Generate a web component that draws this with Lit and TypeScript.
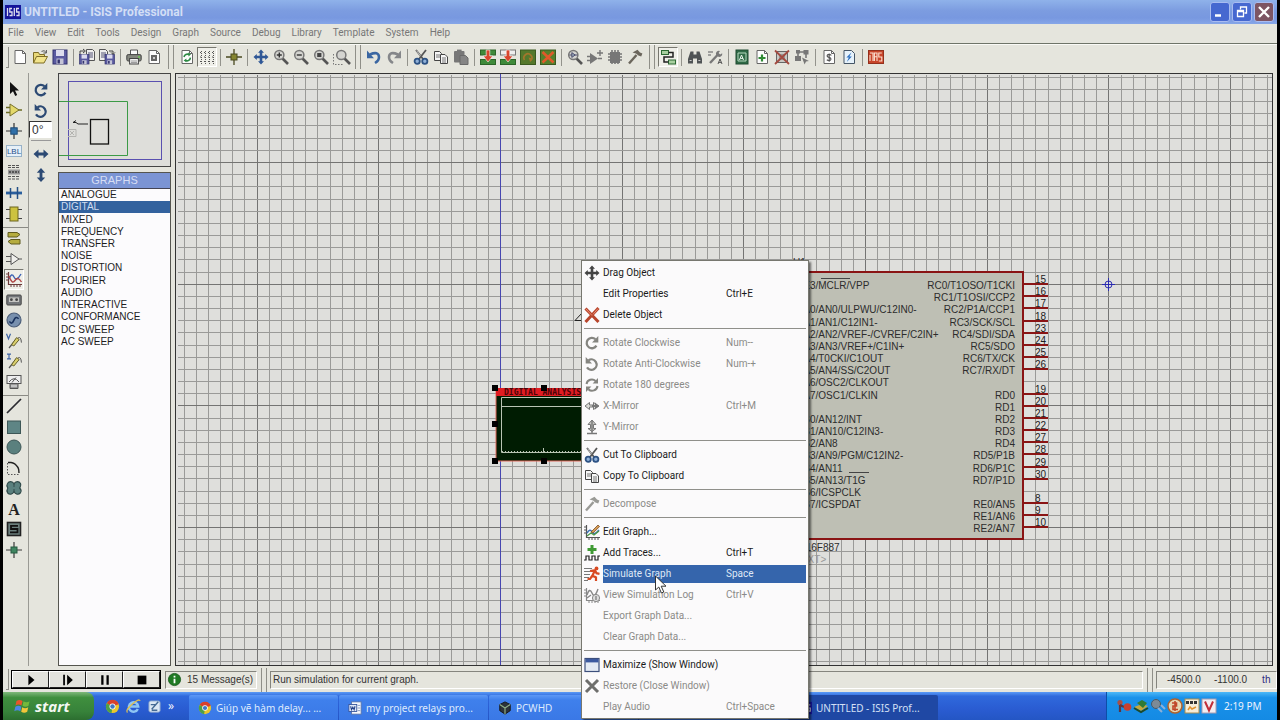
import { LitElement, html, css, svg, nothing, TemplateResult } from "lit";
import { customElement, property } from "lit/decorators.js";
import { classMap } from "lit/directives/class-map.js";

const mag = (inner: TemplateResult | null, stroke = "#777") => svg`
  <path d="M9.5 9.5 L15 15" stroke="#555" stroke-width="2.6"/>
  <circle cx="6.3" cy="6" r="4.6" fill="#d4d4d0" stroke=${stroke} stroke-width="1.5"/>${inner}`;
const page = svg`<path d="M3 1.5h7.5l3 3v10H3z" fill="#fdfdfd" stroke="#666"/><path d="M10.5 1.5v3h3" fill="none" stroke="#666"/>`;
const floppy = (x: number, y: number, s: number) => svg`<g transform="translate(${x} ${y}) scale(${s})">
  <rect x="0" y="0" width="14" height="14" fill="#5a5aa0" stroke="#33336e"/><rect x="3" y="0" width="8" height="6" fill="#dcdcee"/>
  <rect x="3.5" y="8.5" width="7" height="5.5" fill="#c4c4d6"/><rect x="4.5" y="9.5" width="2.4" height="4" fill="#33336e"/></g>`;
const cw = (c: string) => svg`<path d="M12.4 10.6A5.2 5.2 0 1 1 11.4 4.2" fill="none" stroke=${c} stroke-width="2.3"/><path d="M14.3 1v6.4H8z" fill=${c}/>`;
const ccw = (c: string) => svg`<path d="M3 11.4A5.2 5.2 0 1 0 4.6 4.2" fill="none" stroke=${c} stroke-width="2.3"/><path d="M1.7 1v6.4H8z" fill=${c}/>`;
const move = (c: string) => svg`<path d="M8 0.5l3 3.3H9.3v2.9h2.9V5l3.3 3-3.3 3V9.3H9.3v2.9H11L8 15.5l-3-3.3h1.7V9.3H3.8V11L.5 8l3.3-3v1.7h2.9V3.8H5z" fill=${c}/>`;
const horiz = (c: string) => svg`<path d="M0.5 8l5-4.4v3h5v-3l5 4.4-5 4.4v-3h-5v3z" fill=${c}/>`;
const vert = (c: string) => svg`<path d="M8 1l4.2 4.8H9.4v4.6h2.8L8 15l-4.2-4.6h2.8V5.8H3.8z" fill=${c}/>`;
const scissors = svg`<path d="M3 1l7 9M13 1L6 10" stroke="#555" stroke-width="1.8"/><path d="M3.6 1.6l4 5.6" stroke="#ddd" stroke-width=".8"/>
  <circle cx="4.2" cy="12.2" r="2.6" fill="#8fb0d8" stroke="#2d5284" stroke-width="1.8"/><circle cx="11.8" cy="12.2" r="2.6" fill="#8fb0d8" stroke="#2d5284" stroke-width="1.8"/>`;
const copy = svg`<path d="M1.5 2.5h5l2 2v7h-7z" fill="#f6f6f6" stroke="#444"/><path d="M3 6h4M3 8h4" stroke="#777"/>
  <path d="M7.5 5.5h4.5l2.5 2.5v6.5h-7z" fill="#f6f6f6" stroke="#444"/><path d="M9 9h4M9 11h4M9 13h4" stroke="#777"/>`;
const graphAxes = (c: string) => svg`<path d="M2.5 1v12.5H16" fill="none" stroke=${c} stroke-width="1.2"/><path d="M0 3h2M0 6h2M0 9h2M5 14v2M8 14v2M11 14v2M14 14v2" stroke=${c}/>`;
const hammer = (c: string) => svg`<path d="M9.5 6L2 14.5" stroke=${c} stroke-width="2.4"/><path d="M5.5 3.4L10.5.8l2.5 2.8 2.4.8-1.2 3.2-2.8-1L9 4.6z" fill=${c}/>`;
const chrome = svg`<circle cx="8" cy="8" r="7" fill="#e9c62c"/><path d="M8 8L1.9 4.5A7 7 0 0 1 14.6 5.5z" fill="#d8402c"/><path d="M8 8L1.9 4.5A7 7 0 0 0 7 15z" fill="#4da04a"/><circle cx="8" cy="8" r="3.2" fill="#fff"/><circle cx="8" cy="8" r="2.4" fill="#3f77c4"/>`;

const ICONS: Record<string, TemplateResult> = {
  none: svg``,
  fresh: page,
  open: svg`<path d="M1.5 14V3.5h5l1 2h5V8" fill="#e8d878" stroke="#7d6c26"/><path d="M1.5 14l3-6.5h11L12 14z" fill="#f2e48c" stroke="#7d6c26"/><path d="M9.5 2.4q3-2 4.6 1.2M14.4 1v3h-3" fill="none" stroke="#555"/>`,
  save: floppy(1, 1, 1),
  importer: svg`<path d="M7.5.5h6l2 2v9h-8z" fill="#eee" stroke="#555"/><path d="M9 4h5M9 6h5M9 8h5" stroke="#557"/>${floppy(0.5, 5.5, 0.68)}<path d="M1 5V2h4M4 0l2.4 2L4 4" fill="none" stroke="#444"/>`,
  exporter: svg`<path d="M.5.5h6l2 2v9h-8z" fill="#eee" stroke="#555"/><path d="M2 4h5M2 6h5M2 8h5" stroke="#557"/>${floppy(6, 5.5, 0.68)}<path d="M10 2h4v3M12 3.4l2 2 2-2" fill="none" stroke="#444"/>`,
  print: svg`<path d="M4.5 6V1h7v5" fill="#fafafa" stroke="#555"/><rect x=".8" y="5.6" width="14.4" height="6.4" rx="1.4" fill="#85887f" stroke="#444"/><rect x="3.6" y="9.5" width="8.8" height="5.5" fill="#f2f2f2" stroke="#444"/><path d="M5 12h6M5 13.5h6" stroke="#888" stroke-width=".8"/><circle cx="13" cy="8" r=".9" fill="#6bd050"/>`,
  area: svg`${page}<rect x="5" y="6" width="6" height="6" fill="#666"/><rect x="7" y="8" width="2" height="2" fill="#ccc"/>`,
  refresh: svg`${page}<path d="M5 8a3.4 3.4 0 0 1 5-2.4M11.4 8.6a3.4 3.4 0 0 1-5 2.8" fill="none" stroke="#2d8a44" stroke-width="1.6"/><path d="M9 3.6l3 1.6-2.4 2.4zM7.4 9.4v3.8L4.6 11.6z" fill="#2d8a44"/>`,
  dots: svg`<path d="M2.5 2v13M6.5 2v13M10.5 2v13M14.5 2v13" stroke="#555" stroke-dasharray="1 1"/><path d="M1 3.5h14M1 8h14M1 12.5h14" stroke="#555" stroke-dasharray="1 3"/>`,
  origin: svg`<path d="M8 0v16M0 8h16" stroke="#4a4a20" stroke-width="1.3"/><rect x="5" y="5" width="6" height="6" fill="#858530" stroke="#4a4a20"/>`,
  pan: move("#2f5796"),
  zin: mag(svg`<path d="M3.8 6h5M6.3 3.5v5" stroke="#333" stroke-width="1.4"/>`),
  zout: mag(svg`<path d="M3.8 6h5" stroke="#333" stroke-width="1.4"/>`),
  zall: mag(svg`<rect x="4.2" y="4" width="4.2" height="4" fill="#444"/>`),
  zarea: svg`<path d="M.5 5v10.5h9" fill="none" stroke="#777" stroke-dasharray="1.5 1.5"/><g transform="translate(2 0)">${mag(null)}</g>`,
  undo: svg`<path d="M4 5.5Q12.5 1.8 13 8q0 3.6-4 6" fill="none" stroke="#3a66a2" stroke-width="2.6"/><path d="M1 1.6v7.6h7z" fill="#3a66a2"/>`,
  redo: svg`<path d="M12 5.5Q3.5 1.8 3 8q0 3.6 4 6" fill="none" stroke="#85878a" stroke-width="2.6"/><path d="M15 1.6v7.6H8z" fill="#85878a"/>`,
  cut: scissors,
  copy,
  paste: svg`<rect x="1" y="2" width="10.5" height="11.5" rx="1" fill="#777"/><rect x="4" y=".6" width="4.6" height="3" fill="#777"/><path d="M7 6.5h5.5l2.5 2.5v6.5H7z" fill="#858585" stroke="#6a6a6a"/>`,
  blockcopy: svg`<rect x=".5" y="1" width="15" height="5" fill="#3f8a3a" stroke="#2c6428"/><rect x=".5" y="10.5" width="15" height="5" fill="#3f8a3a" stroke="#2c6428"/><path d="M6.2 1h3.6v6h3L8 13 3.2 7h3z" fill="#d8452e" stroke="#fff" stroke-width=".6"/>`,
  blockmove: svg`<rect x=".5" y="1" width="15" height="5" fill="#eee" stroke="#777"/><rect x=".5" y="10.5" width="15" height="5" fill="#3f8a3a" stroke="#2c6428"/><path d="M6.2 1h3.6v6h3L8 13 3.2 7h3z" fill="#d8452e" stroke="#fff" stroke-width=".6"/>`,
  blockrot: svg`<rect x=".5" y="1" width="15" height="14.5" fill="#55782c" stroke="#3b5a20"/><path d="M4.5 11A4 4 0 1 1 11 11.4" fill="none" stroke="#a4762c" stroke-width="1.7"/><path d="M8.6 8.6l4 1-2.4 3.6z" fill="#a4762c"/>`,
  blockdel: svg`<rect x=".5" y="1" width="15" height="14.5" fill="#55802c" stroke="#3b5a20"/><path d="M2.5 3l11 10.5M13.5 3l-11 10.5" stroke="#e0592a" stroke-width="2.6"/>`,
  pick: mag(svg`<path d="M2.4 6h2.4V3.6L8.2 6 4.8 8.4V6M8 6h2.3" stroke="#446" fill="#9ab" stroke-width=".9"/>`),
  make: svg`<path d="M3 4l8 5.5-8 5.5z" fill="#777"/><path d="M0 7.5h3M0 11.5h3M11 9.5h4M13 1v6M10 4h6" stroke="#777" stroke-width="1.4"/>`,
  pack: svg`<rect x="3" y="3" width="10" height="11" fill="#777"/><path d="M1 5h14M1 8h14M1 11h14M5 1v14M8 1v14M11 1v14" stroke="#777" stroke-width="1.6"/>`,
  decomp: hammer("#6b665c"),
  wire: svg`<rect x="1.5" y="1.5" width="7" height="4" fill="#a8d0a0" stroke="#2c6a34"/><rect x="8.5" y="11" width="7" height="4" fill="#a8d0a0" stroke="#2c6a34"/><path d="M8.5 3.5H13v4.5H4v5h4.5" fill="none" stroke="#222" stroke-width="1.5"/>`,
  find: svg`<path d="M3.5 2.5h3v3h3v-3h3L15 10v4.5h-5V9.5H6v5H1V10z" fill="#4f5355"/><path d="M2.6 11.5h2M11.4 11.5h2" stroke="#ccc"/>`,
  assign: svg`<path d="M1 3h5M1 6h3" stroke="#888" stroke-width="1.4"/><path d="M3 14l7.5-8" stroke="#777" stroke-width="2.4"/><path d="M9 5.5a3 3 0 0 1 4-3.6L11.6 4l1.6 1.6 2-1.4a3 3 0 0 1-4.4 3.3z" fill="#777"/><path d="M11 15l2-5 2 5M11.6 13.4h2.8" stroke="#555" fill="none"/>`,
  explorer: svg`<rect x="2" y="1" width="12" height="14" fill="#2f6a46" stroke="#1e4a30"/><path d="M4 4h8v8H4z" fill="none" stroke="#b6d8be"/><path d="M5.5 11l2-5 2 5M6.3 9.4h2.8" stroke="#e8f4ea" fill="none"/>`,
  newsheet: svg`${page}<path d="M8 5.5v7M4.5 9h7" stroke="#2f8a34" stroke-width="2.2"/>`,
  rmsheet: svg`<rect x="2.5" y="2.5" width="11" height="11" fill="#c9c9c4" stroke="#666"/><path d="M5 6h6M5 8h6M5 10h6" stroke="#666"/><path d="M1 1.5l14 13.5M15 1.5L1 15" stroke="#a34a40" stroke-width="1.8"/>`,
  exitp: svg`<path d="M4 7V3h8v6" fill="none" stroke="#777" stroke-width="1.6"/><rect x="1" y="7" width="6" height="5" fill="#777"/><rect x="9.5" y="1" width="5" height="4.5" fill="#777"/><rect x="2" y="1" width="4" height="3.5" fill="#777"/><path d="M8 8.5l7 3.5-3 .6-1.4 3z" fill="#777"/>`,
  bom: svg`${page}<path d="M10.4 6.4Q8 4.6 6.4 6q-1 1.6 1.6 2.4 2.8.9 1.6 2.6-1.8 1.2-3.8-.2M8.2 4.4v8.4" fill="none" stroke="#555" stroke-width="1.1"/>`,
  erc: svg`<path d="M3 1.5h7.5l3 3v10H3z" fill="#e6f2fb" stroke="#456"/><path d="M10.4 3.6L5.4 8.6h2.4L5.8 13l5-5.4H8.4z" fill="#2b6fc0"/>`,
  ares: svg`<rect x=".5" y="1.5" width="15" height="13" fill="#c8452a" stroke="#93301c"/><path d="M2 4h3v8M2 12V6M6.4 12V4H9v3.8H6.4M9 8v4M13.8 4H10.8v4h3v4h-3" stroke="#fbe0d0" fill="none" stroke-width="1.1"/>`,
  pointer: svg`<path d="M4 1v12l3-2.8L9.2 15l2-1-2.2-4.6h4z" fill="#111"/>`,
  comp: svg`<path d="M0 5.5h4M0 10.5h4M12 8h4" stroke="#6b6b24" stroke-width="1.3"/><path d="M4 2l9 6-9 6z" fill="#e4d96a" stroke="#77712a"/>`,
  junction: svg`<path d="M8 0v16M0 8h16" stroke="#333" stroke-width="1.2"/><rect x="4.8" y="4.8" width="6.4" height="6.4" fill="#2f6fa8" stroke="#1f4a74"/>`,
  label: svg`<rect x=".5" y="2.5" width="15" height="11" fill="#e6f0f8" stroke="#4a7aa8" stroke-dasharray="1 1"/><text x="8" y="11" text-anchor="middle" font-size="8" font-family="Liberation Sans, sans-serif" fill="#1f4f8a">LBL</text>`,
  script: svg`<path d="M2 1.5h12M2 3.5h12M2 12.5h12M2 15h12" stroke="#555" stroke-dasharray="3 1"/><rect x="2" y="5.5" width="12" height="5" fill="#999"/><path d="M3 8h10" stroke="#555" stroke-width="2" stroke-dasharray="2 1"/>`,
  bus: svg`<path d="M0 8h16" stroke="#2a5f9e" stroke-width="2.8"/><path d="M4.5 3v10M11.5 2v12" stroke="#234f86" stroke-width="1.5"/>`,
  sub: svg`<path d="M0 3.5h16M0 12.5h16" stroke="#444" stroke-width="1.2"/><rect x="4" y="1" width="8" height="14" fill="#cdc23f" stroke="#6c6620"/>`,
  terminal: svg`<path d="M2 2.5h9l3 2-3 2.5H2zM14 9.5H5l-3 2 3 2.5h9z" fill="#b5ac3e" stroke="#5f5a1e"/>`,
  pin: svg`<path d="M0 5.5h5M0 10.5h5M13 8h3" stroke="#555" stroke-width="1.2"/><path d="M5 2.5l8 5.5-8 5.5z" fill="#f0f0ec" stroke="#555"/>`,
  graph: svg`${graphAxes("#6b3a3a")}<path d="M3 8q2.6-7 5-2t7-3" fill="none" stroke="#3c62b4" stroke-width="1.4"/><path d="M3 5q3 9 6 4.5T15.5 11" fill="none" stroke="#b04848" stroke-width="1.4"/>`,
  tape: svg`<rect x=".8" y="3" width="14.4" height="10" rx="1" fill="#74777a" stroke="#444"/><rect x="3" y="5.4" width="10" height="4.6" fill="#c5c5c2"/><circle cx="5.4" cy="7.7" r="1.4" fill="#444"/><circle cx="10.6" cy="7.7" r="1.4" fill="#444"/>`,
  gen: svg`<circle cx="8" cy="8" r="7" fill="#7890ae" stroke="#4d5f7a" stroke-width="1.2"/><path d="M3.4 9.4q2.4 3.8 4.4-1t4.8-1.6" fill="none" stroke="#18305c" stroke-width="1.6"/>`,
  vprobe: svg`<path d="M.5.8l2 5 2-5" fill="none" stroke="#3c62a4" stroke-width="1.2"/><path d="M3 15L10.4 6" stroke="#555" stroke-width="1.2"/><path d="M5.6 11.6l5-7 2.6 2-5.4 6.4z" fill="#d9cf6c" stroke="#66602a"/><path d="M12 5q3-2 3.4 4.6" fill="none" stroke="#555"/>`,
  iprobe: svg`<path d="M1 1.2h4M3 1v5M1 5.8h4" fill="none" stroke="#3c62a4" stroke-width="1.2"/><path d="M3 15L10.4 6" stroke="#555" stroke-width="1.2"/><path d="M5.6 11.6l5-7 2.6 2-5.4 6.4z" fill="#d9cf6c" stroke="#66602a"/><path d="M12 5q3-2 3.4 4.6" fill="none" stroke="#555"/>`,
  meter: svg`<rect x="1" y="1.5" width="14" height="8" fill="#eee" stroke="#555"/><path d="M3 8q5-6.5 10 0M6 8.5l4-5" fill="none" stroke="#555"/><path d="M4 10v4.5h8V10" fill="#999" stroke="#555"/><path d="M5 12h6" stroke="#eee"/>`,
  line: svg`<path d="M1 15L15 1" stroke="#2b2b30" stroke-width="1.7"/>`,
  box: svg`<rect x="1.5" y="2" width="13" height="12.5" fill="#5e8585" stroke="#3c5656"/>`,
  circle: svg`<circle cx="8" cy="8" r="7" fill="#5a807e" stroke="#3c5656"/>`,
  arc: svg`<path d="M1.5 3v11.5H14" fill="none" stroke="#555" stroke-dasharray="1.5 1.5"/><path d="M2 2.5h3q4 .4 7 5 1 1.5 1 5.5" fill="none" stroke="#222" stroke-width="1.4"/>`,
  path: svg`<path d="M8 3.8C9.5 1 13 1 14.5 3.5c1 2-.2 3.5-.8 4.5 1.2 1.2 2 3 .6 5-1.8 2-4.8 1.5-6.3-1.2-1.5 2.7-4.5 3.2-6.3 1.2C.5 11 .8 9.5 1.8 8 .8 6.5.5 5 1.5 3.5 3 1 6.5 1 8 3.8z" fill="#5a807e" stroke="#304a4a" stroke-width="1.2"/><path d="M8 4v3M8 9v3" stroke="#304a4a"/>`,
  text: svg`<text x="8" y="14" text-anchor="middle" font-size="16" font-weight="bold" font-family="Liberation Serif, serif" fill="#222">A</text>`,
  symbol: svg`<rect x="1.5" y="1.5" width="13" height="13" fill="#6b7f7d" stroke="#222" stroke-width="1.6"/><path d="M12 4.8H5V8h6.5v3.4H4" fill="none" stroke="#111" stroke-width="1.8"/>`,
  marker: svg`<path d="M8 0v16M0 8h16" stroke="#3b3b3b" stroke-width="1.2"/><rect x="5" y="5" width="6" height="6" fill="#3f8560" stroke="#275a40"/>`,
  cw: cw("#2c4a74"),
  ccw: ccw("#2c4a74"),
  hm: horiz("#2c4a74"),
  vm: vert("#2c4a74"),
  gcw: cw("#858580"),
  gccw: ccw("#858580"),
  g180: svg`<path d="M2.5 7A5.4 5.4 0 0 1 11.6 4M13.5 9A5.4 5.4 0 0 1 4.4 12.2" fill="none" stroke="#858580" stroke-width="2"/><path d="M14 1v5.6H8.6zM2 15V9.5h5.4z" fill="#858580"/>`,
  ghm: svg`<path d="M1 8l4.5-3.5V7h4V4.5L15 8l-5.5 3.5V9h-4v2.5z" fill="#dcdcd8" stroke="#777"/><path d="M8 7h3V4.6L15 8l-4 3.4V9H8z" fill="#777"/>`,
  gvm: svg`<path d="M8 1l4 4.5H9.5v4H12L8 12.5l-4-3h2.5v-4H4z" fill="#c8c8c4" stroke="#777"/><path d="M3 14.5h10M8 1.5V14" stroke="#777" stroke-width="1.4"/>`,
  drag: move("#444"),
  del: svg`<path d="M1.5 1.5l13 13.5M14.5 1L1.5 15" stroke="#b8452c" stroke-width="3"/><path d="M2 2l6 6.5M14 1.6L9 7.4" stroke="#e88a70" stroke-width="1"/>`,
  gham: hammer("#9a9a96"),
  editg: svg`${graphAxes("#555")}<path d="M3 9q3-5 5-1t7-2" fill="none" stroke="#3c72b4" stroke-width="1.5"/><path d="M3 12l4-3 3 2 5-4" fill="none" stroke="#4b9a48" stroke-width="1.3"/><path d="M7 8l7-7 1.6 1.6L9 9z" fill="#d49a55" stroke="#7c4f24" stroke-width=".8"/>`,
  addt: svg`<path d="M8 0v9M3.5 4.5h9" stroke="#3f9a34" stroke-width="3"/><path d="M0 15h2v-4h3v4h3v-4h3v4h3v-4h2" fill="none" stroke="#222" stroke-width="1.2"/>`,
  sim: svg`<path d="M0 2.5h8M0 5.5h6M0 8.5h6M0 11.5h5M0 14.5h4" stroke="#777"/><circle cx="12.5" cy="2.4" r="1.9" fill="#d84a22"/><path d="M6 5l5-.8 1.5 3 3 .6M10.6 5L8.5 9.5l3.5 2V15M8.5 9.5L6 13H3.5" fill="none" stroke="#d84a22" stroke-width="2.2"/>`,
  simlog: svg`${graphAxes("#888")}<path d="M3 8q2.5-8 5-2t6-4M3 11l4-3" fill="none" stroke="#888" stroke-width="1.4"/><circle cx="12" cy="11" r="3.6" fill="#ddd" stroke="#888"/><path d="M12 9v4" stroke="#777" stroke-width="1.2"/>`,
  win: svg`<rect x="1" y="1.5" width="14" height="13" fill="#e4eaf4" stroke="#3d4f7c" stroke-width="1.2"/><rect x="1.5" y="2" width="13" height="3.4" fill="#3d5aa0"/>`,
  gx: svg`<path d="M2 2l12 12M14 2L2 14" stroke="#6e6e6c" stroke-width="3"/>`,
  info: svg`<circle cx="8" cy="8" r="7.5" fill="#1f7a24" stroke="#15561a"/><path d="M8 7v5.5M8 3.3v2.2" stroke="#fff" stroke-width="2.2"/>`,
  play: svg`<path d="M5 2l7 6-7 6z" fill="#000"/>`,
  step: svg`<path d="M3.5 2v12" stroke="#000" stroke-width="2"/><path d="M7 2l6.5 6L7 14z" fill="#000"/>`,
  pause: svg`<path d="M5 2.5v11M11 2.5v11" stroke="#000" stroke-width="2.6"/>`,
  stop: svg`<rect x="3" y="3" width="10" height="10" fill="#000"/>`,
  flag: svg`<path d="M1.5 3q3-2 6 0L6.5 7.5q-3-2-6 0z" fill="#e8552c"/><path d="M8.5 3.3q3 2 6 0l-1 4.5q-3 2-6 0z" fill="#74b83c"/><path d="M.3 8.8q3-2 6 0l-1 4.5q-3-2-6 0z" fill="#4c86e6"/><path d="M7.2 9.2q3 2 6 0l-1 4.5q-3 2-6 0z" fill="#f2c53a"/>`,
  chrome,
  ie: svg`<path d="M12.6 10.6A5 5 0 1 1 13 8H4" fill="none" stroke="#8fc6f4" stroke-width="2.6"/><path d="M1.5 14.5Q-1 12 6.5 5.5T15 2" fill="none" stroke="#e0c050" stroke-width="1.4"/>`,
  desk: svg`<rect x="2" y="2" width="12" height="12" rx="2" fill="#dce8f4" stroke="#7e9cc8"/><path d="M5 11l7-8M4 6h5M5 12h6" stroke="#446a94" stroke-width="1.5"/>`,
  word: svg`<rect x="4" y="1" width="11" height="14" fill="#f6f8fc" stroke="#5a74a8"/><path d="M11 5h3M11 8h3M11 11h3" stroke="#7d94c0"/><rect x="1" y="4" width="9" height="8" fill="#dfe8f8" stroke="#34529a"/><path d="M3 6l1 4 1.5-3L7 10l1-4" fill="none" stroke="#24428a" stroke-width="1.2"/>`,
  pcw: svg`<path d="M8 1l6 3v7l-6 4-6-4V4z" fill="#2c3238" stroke="#111"/><path d="M8 8l6-4M8 8v7M8 8L2 4" stroke="#8fb08a" stroke-width="1.3"/>`,
  isis: svg`<rect x="0" y="1" width="16" height="14" fill="#15159a"/><path d="M2.5 4v8M7 4.5H4.8V8H7v3.5H4.5M9.3 4v8M14 4.5h-2.4V8H14v3.5h-2.6" fill="none" stroke="#dde" stroke-width="1.3"/>`,
  t1: svg`<circle cx="4" cy="4.5" r="2.6" fill="#a85048"/><path d="M4 7v7M4 7l4 2" stroke="#5c3440" stroke-width="2.2"/><circle cx="11.5" cy="9" r="3.8" fill="#c8402f"/>`,
  t2: svg`<path d="M1 9l8-3 6 2-7 5z" fill="#c4a83e"/><path d="M4 5l5-3 5 3-4 5z" fill="#2f7a36"/><path d="M1 10l7 4 7-4" fill="none" stroke="#1c4a2a" stroke-width="2"/>`,
  t3: svg`<circle cx="6" cy="6" r="4.5" fill="#7d8a96" stroke="#4c5a66"/><path d="M8 10l4 4M11 7l4 4" stroke="#8cb0d8" stroke-width="2"/>`,
  t4: svg`<circle cx="8" cy="8" r="7" fill="#e6d8b4" stroke="#b0622c" stroke-width="1.5"/><path d="M5 5h4.5v3H6v3.5h5M8 3v10" fill="none" stroke="#c0482a" stroke-width="1.6"/>`,
  t5: svg`<rect x="1" y="1" width="14" height="14" fill="#f4ecd8" stroke="#a88c50"/><path d="M2 4.5h12" stroke="#333" stroke-width="3" stroke-dasharray="3 1"/><path d="M4 12l2-3 2 2 4-2" stroke="#e0902c" stroke-width="1.5" fill="none"/>`,
  t6: svg`<rect x="1" y="1" width="14" height="14" fill="#f3eef2" stroke="#a89cb0"/><path d="M4 3.5l4 9 4-9" fill="none" stroke="#c02f3a" stroke-width="2"/>`,
};

@customElement("ui-icon")
class UiIcon extends LitElement {
  static styles = css`
    :host { display: block; width: 16px; height: 16px; flex: none; }
    svg { display: block; width: 100%; height: 100%; overflow: visible; }
  `;
  @property() name = "none";
  render() {
    return html`<svg viewBox="0 0 16 16" fill="none" aria-hidden="true">${ICONS[this.name]}</svg>`;
  }
}

const MENUS = ["File", "View", "Edit", "Tools", "Design", "Graph", "Source", "Debug", "Library", "Template", "System", "Help"];

/* "|" is a thin divider, "||" the grip between two toolbars, "*" a pressed button */
const TOOLBAR = [
  "fresh", "open", "save", "|", "importer", "exporter", "|", "print", "area", "||",
  "refresh", "*dots", "|", "origin", "|", "pan", "zin", "zout", "zall", "zarea", "||",
  "undo", "redo", "|", "cut", "copy", "paste", "|", "blockcopy", "blockmove", "blockrot", "blockdel", "|",
  "pick", "make", "pack", "decomp", "||",
  "*wire", "|", "find", "assign", "|", "explorer", "newsheet", "rmsheet", "exitp", "|", "bom", "erc", "|", "ares",
];

const MODES = [
  ["pointer", "comp", "junction", "label", "script", "bus", "sub"],
  ["terminal", "pin", "*graph", "tape", "gen", "vprobe", "iprobe", "meter"],
  ["line", "box", "circle", "arc", "path", "text", "symbol", "marker"],
];

const GRAPHS = ["ANALOGUE", "DIGITAL", "MIXED", "FREQUENCY", "TRANSFER", "NOISE", "DISTORTION", "FOURIER", "AUDIO",
  "INTERACTIVE", "CONFORMANCE", "DC SWEEP", "AC SWEEP"];

type Entry = { icon?: string; label: string; key?: string; off?: boolean; on?: boolean };
const CONTEXT: Entry[][] = [
  [
    { icon: "drag", label: "Drag Object" },
    { label: "Edit Properties", key: "Ctrl+E" },
    { icon: "del", label: "Delete Object" },
  ],
  [
    { icon: "gcw", label: "Rotate Clockwise", key: "Num--", off: true },
    { icon: "gccw", label: "Rotate Anti-Clockwise", key: "Num-+", off: true },
    { icon: "g180", label: "Rotate 180 degrees", off: true },
    { icon: "ghm", label: "X-Mirror", key: "Ctrl+M", off: true },
    { icon: "gvm", label: "Y-Mirror", off: true },
  ],
  [
    { icon: "cut", label: "Cut To Clipboard" },
    { icon: "copy", label: "Copy To Clipboard" },
  ],
  [{ icon: "gham", label: "Decompose", off: true }],
  [
    { icon: "editg", label: "Edit Graph..." },
    { icon: "addt", label: "Add Traces...", key: "Ctrl+T" },
    { icon: "sim", label: "Simulate Graph", key: "Space", on: true },
    { icon: "simlog", label: "View Simulation Log", key: "Ctrl+V", off: true },
    { label: "Export Graph Data...", off: true },
    { label: "Clear Graph Data...", off: true },
  ],
  [
    { icon: "win", label: "Maximize (Show Window)" },
    { icon: "gx", label: "Restore (Close Window)", off: true },
    { label: "Play Audio", key: "Ctrl+Space", off: true },
  ],
];

const LEFT_PINS: [number, string][] = [
  [0, "RE3/MCLR/VPP"], [2, "RA0/AN0/ULPWU/C12IN0-"], [3, "RA1/AN1/C12IN1-"], [4, "RA2/AN2/VREF-/CVREF/C2IN+"],
  [5, "RA3/AN3/VREF+/C1IN+"], [6, "RA4/T0CKI/C1OUT"], [7, "RA5/AN4/SS/C2OUT"], [8, "RA6/OSC2/CLKOUT"],
  [9, "RA7/OSC1/CLKIN"], [11, "RB0/AN12/INT"], [12, "RB1/AN10/C12IN3-"], [13, "RB2/AN8"],
  [14, "RB3/AN9/PGM/C12IN2-"], [15, "RB4/AN11"], [16, "RB5/AN13/T1G"], [17, "RB6/ICSPCLK"], [18, "RB7/ICSPDAT"],
];
const RIGHT_PINS: [number, string, string][] = [
  [0, "RC0/T1OSO/T1CKI", "15"], [1, "RC1/T1OSI/CCP2", "16"], [2, "RC2/P1A/CCP1", "17"], [3, "RC3/SCK/SCL", "18"],
  [4, "RC4/SDI/SDA", "23"], [5, "RC5/SDO", "24"], [6, "RC6/TX/CK", "25"], [7, "RC7/RX/DT", "26"],
  [9, "RD0", "19"], [10, "RD1", "20"], [11, "RD2", "21"], [12, "RD3", "22"], [13, "RD4", "27"],
  [14, "RD5/P1B", "28"], [15, "RD6/P1C", "29"], [16, "RD7/P1D", "30"],
  [18, "RE0/AN5", "8"], [19, "RE1/AN6", "9"], [20, "RE2/AN7", "10"],
];

/* distance between two grid lines; every tenth line is a heavy one */
const PITCH = 12.17;

@customElement("schematic-view")
class SchematicView extends LitElement {
  static styles = css`
    :host { display: block; overflow: hidden; background: #dfdfdc; }
    svg { display: block; width: 100%; height: 100%; font: 10px "Liberation Sans", Arial, sans-serif; }
    .minor { stroke: #9a9a98; }
    .major { stroke: #747473; }
    .axis { stroke: #4646b0; }
    .body { fill: #bebfb4; stroke: #8a1414; stroke-width: 2; }
    .pin { stroke: #8a1414; stroke-width: 2; }
    .name { fill: #2c2c2c; }
    .num { fill: #1c1c1c; }
    .faint { fill: #999; }
    .bar { stroke: #444; }
    .tiny { font: bold 8px "DejaVu Sans Mono", monospace; fill: #4a0408; }
  `;
  private grid() {
    const out: TemplateResult[] = [];
    for (let i = 0; i < 200; i++) {
      const x = Math.round(183.5 + i * PITCH) + 0.5;
      out.push(svg`<line class=${i % 10 === 6 ? "major" : "minor"} x1=${x} y1="75" x2=${x} y2="1600"/>`);
    }
    for (let j = 0; j < 130; j++) {
      const y = Math.round(76.8 + j * PITCH) + 0.5;
      out.push(svg`<line class=${j % 10 === 7 ? "major" : "minor"} x1="178" y1=${y} x2="2600" y2=${y}/>`);
    }
    return out;
  }
  render() {
    const y = (n: number) => Math.round(284 + n * PITCH);
    return html`<svg role="img" aria-label="Schematic">
      <g transform="translate(-176 -74)">
        ${this.grid()}
        <line class="axis" x1="500.5" y1="0" x2="500.5" y2="1600"/>
        <rect class="body" x="700" y="272" width="323" height="267"/>
        ${LEFT_PINS.map(([n, t]) => svg`<text class="name" x="796" y=${y(n) + 5}>${t}</text>`)}
        ${RIGHT_PINS.map(([n, t, p]) => svg`
          <line class="pin" x1="1023" y1=${y(n)} x2="1048" y2=${y(n)}/>
          <text class="name" x="1015" y=${y(n) + 5} text-anchor="end">${t}</text>
          <text class="num" x="1035" y=${y(n) - 1}>${p}</text>`)}
        <path class="bar" d="M821 278.5h29M849 472.5h20"/>
        <text class="name" x="793" y="266">U1</text>
        <text class="name" x="789" y="551">PIC16F887</text>
        <text class="faint" x="789" y="563">&lt;TEXT&gt;</text>
        <path d="M582 313l-7 7.5h8" fill="none" stroke="#222"/>
        <rect x="496" y="389" width="120" height="72" fill="#001c02" stroke="#e0685a"/>
        <rect x="496" y="388" width="120" height="8" fill="#e01c22"/>
        <text class="tiny" x="504" y="395">DIGITAL ANALYSIS</text>
        <path d="M620 397.5H501.5V452.5H620M502 406.5H620" fill="none" stroke="#b9c4b4"/>
        <path d="M502 451.5H620" stroke="#b9c4b4" stroke-dasharray="1 2"/><path d="M543.5 448v4" stroke="#b9c4b4"/>
        ${[[495, 388], [544, 388], [495, 424], [495, 461], [544, 461]].map(([a, b]) => svg`<rect x=${a - 3} y=${b - 3} width="6" height="6" fill="#000"/>`)}
        <g stroke="#2a2ab0" fill="none"><circle cx="1108.5" cy="284.5" r="3.5"/><path d="M1102 284.5h13M1108.5 278v13"/></g>
      </g>
    </svg>`;
  }
}

@customElement("context-menu")
class ContextMenu extends LitElement {
  static styles = css`
    :host { display: block; box-sizing: border-box; padding: 1px 2px; background: #fbfafb; border: 1px solid #77776f; box-shadow: 2px 2px 2px #0008; }
    .group + .group { border-top: 1px solid #8f8f8a; margin-top: 3px; padding-top: 3px; }
    .item { display: grid; grid-template-columns: 19px 1fr; align-items: center; width: 100%; height: 21px; padding: 0; border: 0; background: none; font: inherit; color: #1a1a1a; text-align: left; white-space: nowrap; }
    .off { color: #8b8b88; }
    .line { display: grid; grid-template-columns: 123px 1fr; height: 18px; line-height: 18px; }
    .on .line { background: #3565ac; color: #dfe8f6; }
  `;
  render() {
    return html`${CONTEXT.map((g) => html`<div class="group" role="group">
      ${g.map((e) => html`<button class="item ${classMap({ off: !!e.off, on: !!e.on })}" role="menuitem" ?disabled=${!!e.off}>
        <ui-icon name=${e.icon ?? "none"}></ui-icon>
        <span class="line"><span>${e.label}</span><span>${e.key ?? nothing}</span></span>
      </button>`)}
    </div>`)}`;
  }
}

@customElement("app-root")
class AppRoot extends LitElement {
  static styles = css`
    :host { display: block; height: 100vh; position: relative; overflow: hidden; box-sizing: border-box; border: solid #000; border-width: 0 3px; background: #e5e5dd; font: 10px/14px Roboto, "Liberation Sans", sans-serif; color: #222; }
    * { box-sizing: border-box; }
    button { font: inherit; color: inherit; background: none; border: 0; padding: 0; margin: 0; }
    .frame { display: grid; grid-template-rows: 24px 20px 29px 1fr 26px 28px; height: 100%; }
    .title { display: flex; align-items: center; gap: 3px; padding: 0 3px 0 2px; background: linear-gradient(#8fb2ea, #7c9ce0 45%, #7898e0 75%, #86a6e8); }
    h1 { flex: 1; margin: 0; font: bold 12px/16px Roboto, sans-serif; color: #d3def5; }
    .winbtns { display: flex; gap: 2px; }
    .wb { display: grid; place-items: center; width: 20px; height: 20px; border: 1px solid #a9bcf0; border-radius: 3px; background: #4668d0; color: #fff; }
    .wb.close { background: #7d5563; }
    .wb svg { width: 14px; height: 14px; }
    .menus { display: flex; align-items: center; gap: 11px; padding: 0 5px 2px; border-bottom: 1px solid #6e7468; color: #777; }
    .tools { display: flex; align-items: center; padding: 0 0 4px; border-top: 1px solid #fafaf6; }
    .grip { width: 3px; height: 21px; margin: 0 1px 0 3px; border-right: 1px solid #8f8f88; border-bottom: 1px solid #8f8f88; flex: none; }
    .tool { display: grid; place-items: center; width: 20px; height: 20px; flex: none; }
    .down { border: 1px solid; border-color: #77776f #fff #fff #77776f; background: #efefe9; }
    .sep { width: 1px; height: 17px; margin: 0 3px; background: #93938c; flex: none; }
    .bigsep { width: 6px; height: 24px; margin: 0 3px 0 4px; border: solid #8f8f88; border-width: 0 1px; flex: none; }
    .work { display: grid; grid-template-columns: 26px 29px 113px 1fr; min-height: 0; padding-right: 4px; }
    .modes { padding-top: 6px; border-right: 1px solid #9a9a94; }
    .set { display: grid; grid-auto-rows: 1fr; justify-items: center; height: 165px; padding-right: 4px; }
    .set:first-child { height: 145px; }
    .set + .set { margin-top: 3px; border-top: 1px solid #8a8a84; }
    .mode { display: grid; place-items: center; width: 20px; }
    .orient { display: flex; flex-direction: column; align-items: center; padding: 6px 6px 0 0; }
    .orient .tool { height: 21px; }
    .angle { width: 23px; height: 17px; padding: 0 2px; margin-bottom: 2px; border: 1px solid; border-color: #333 #fff #fff #333; background: #fff; font: 12px "Liberation Sans", sans-serif; color: #333; }
    .rule { width: 20px; height: 1px; margin-bottom: 2px; background: #999; }
    .panel { display: grid; grid-template-rows: 94px 1fr; gap: 5px; min-height: 0; font-family: "Liberation Sans", sans-serif; }
    .overview { border: 1px solid #444; background: #dededa; }
    .overview svg { display: block; width: 111px; height: 92px; }
    .list { border: 1px solid #55554f; background: #fcfbfd; display: flex; flex-direction: column; min-height: 0; }
    .head { margin: 0; height: 16px; background: #7b94d4; border-bottom: 1px solid #445; font: 11px/15px "Liberation Sans", sans-serif; color: #d7def4; text-align: center; }
    .rows { display: grid; grid-auto-rows: 1fr; height: 159px; }
    .row { padding: 0 2px; text-align: left; display: flex; align-items: center; line-height: 12px; color: #1d1d1d; }
    .row.sel { background: #33629e; color: #cfdcf0; }
    .canvas { margin-left: 4px; border: 1px solid #333; min-width: 0; min-height: 0; }
    .status { display: flex; align-items: center; padding-top: 1px; font: 10px "Liberation Sans", sans-serif; color: #333; }
    .transport { display: flex; margin-left: 1px; border: 1px solid #000; }
    .tb { display: grid; place-items: center; width: 37px; height: 17px; border: 1px solid; border-color: #fff #222 #222 #fff; background: #e3e3dd; }
    .tb ui-icon, .task ui-icon { width: 14px; height: 14px; }
    .well { display: flex; align-items: center; height: 18px; border: 1px solid; border-color: #85857e #fff #fff #85857e; white-space: nowrap; }
    .msgs { gap: 6px; width: 92px; margin-left: 4px; padding-left: 2px; }
    .msgs ui-icon { width: 13px; height: 13px; }
    .hint { flex: 1; padding-left: 2px; }
    .coords { width: 121px; padding-left: 10px; gap: 13px; }
    .unit { margin-left: 2px; color: #2c2c80; }
    .taskbar { display: flex; background: linear-gradient(#5a9af6, #2f69dc 15%, #2a5cd2 60%, #2456c4); color: #eef3fd; overflow: hidden; font-family: "Noto Sans", sans-serif; }
    .start { display: flex; align-items: center; gap: 4px; width: 91px; padding-left: 12px; border-radius: 0 8px 8px 0; background: linear-gradient(#7fb87a, #3f8f3e 20%, #37823a 70%, #2c6e30); font: italic bold 15px/20px "Open Sans", sans-serif; color: #f4f8f2; }
    .quick { display: flex; align-items: center; gap: 6px; width: 95px; padding-left: 11px; font-size: 12px; }
    .quick ui-icon { width: 15px; height: 15px; }
    .task { display: flex; align-items: center; gap: 4px; width: 149px; margin: 3px 1px 0 0; padding-left: 9px; border-radius: 2px 2px 0 0; background: linear-gradient(#5c98f6, #3f80ec 20%, #3a78e6); white-space: nowrap; color: #dfeafc; }
    .task.active { background: #1f48a4; color: #d4e0f6; }
    .tray { display: flex; align-items: center; gap: 1px; margin-left: auto; width: 171px; padding-left: 9px; border-left: 1px solid #0e4ea8; background: linear-gradient(#4cb8f8, #1a92ea 20%, #148ae4); }
    .clock { margin-left: 6px; white-space: nowrap; }
    .popup { position: absolute; left: 578px; top: 260px; width: 228px; }
    .cursor { position: absolute; left: 651px; top: 575px; width: 13px; height: 20px; }
  `;
  private tool(name: string, kind = "tool") {
    if (name === "|") return html`<i class="sep"></i>`;
    if (name === "||") return html`<i class="bigsep"></i>`;
    const down = name[0] === "*";
    const id = down ? name.slice(1) : name;
    return html`<button class=${classMap({ [kind]: true, down })} aria-label=${id}><ui-icon name=${id}></ui-icon></button>`;
  }
  render() {
    return html`<div class="frame">
      <header class="title">
        <ui-icon name="isis"></ui-icon>
        <h1>UNTITLED - ISIS Professional</h1>
        <div class="winbtns">
          <button class="wb" aria-label="Minimize"><svg viewBox="0 0 14 14"><path d="M2 10.5h6" stroke="#fff" stroke-width="2.5"/></svg></button>
          <button class="wb" aria-label="Restore"><svg viewBox="0 0 14 14" fill="none" stroke="#fff" stroke-width="1.3"><path d="M5.5 4.5V2h6v6h-2"/><path d="M2.5 5.5h6v6h-6zM2.5 6.5h6"/></svg></button>
          <button class="wb close" aria-label="Close"><svg viewBox="0 0 14 14"><path d="M2 2l10 10M12 2L2 12" stroke="#fff" stroke-width="2.4"/></svg></button>
        </div>
      </header>
      <nav class="menus">${MENUS.map((m) => html`<button>${m}</button>`)}</nav>
      <div class="tools" role="toolbar"><i class="grip"></i>${TOOLBAR.map((t) => this.tool(t))}</div>
      <main class="work">
        <div class="modes">${MODES.map((s) => html`<div class="set">${s.map((m) => this.tool(m, "mode"))}</div>`)}</div>
        <div class="orient">
          ${this.tool("cw")}${this.tool("ccw")}
          <input class="angle" aria-label="Angle" value="0°">
          <i class="rule"></i>
          ${this.tool("hm")}${this.tool("vm")}
        </div>
        <aside class="panel">
          <div class="overview"><svg viewBox="59 74 111 92" fill="none" aria-hidden="true">
            <rect x="68.5" y="81.5" width="93" height="78" stroke="#5a50b0"/>
            <path d="M59 101.5h68.5v54H59" stroke="#3c9a46"/>
            <rect x="90.5" y="119.5" width="18" height="24.5" stroke="#111" stroke-width="1.3"/>
            <path d="M73 122.5h3l2 1.5h10M76 120.5l-3 2" stroke="#222"/>
            <path d="M68 129.5h8v7h-8M70 131l4 4M74 131l-4 4" stroke="#b4b4b0"/>
          </svg></div>
          <div class="list">
            <h2 class="head">GRAPHS</h2>
            <div class="rows">${GRAPHS.map((g) => html`<button class="row ${classMap({ sel: g === "DIGITAL" })}">${g}</button>`)}</div>
          </div>
        </aside>
        <schematic-view class="canvas"></schematic-view>
      </main>
      <footer class="status">
        <i class="grip"></i>
        <div class="transport">${["play", "step", "pause", "stop"].map((n) => html`<button class="tb" aria-label=${n}><ui-icon name=${n}></ui-icon></button>`)}</div>
        <div class="well msgs"><ui-icon name="info"></ui-icon><span>15 Message(s)</span></div>
        <i class="bigsep"></i>
        <div class="well hint">Run simulation for current graph.</div>
        <i class="bigsep"></i>
        <div class="well coords"><span>-4500.0</span><span>-1100.0</span><span class="unit">th</span></div>
      </footer>
      <div class="taskbar">
        <button class="start"><ui-icon name="flag"></ui-icon>start</button>
        <div class="quick"><ui-icon name="chrome"></ui-icon><ui-icon name="ie"></ui-icon><ui-icon name="desk"></ui-icon><span>»</span></div>
        <button class="task"><ui-icon name="chrome"></ui-icon>Giúp vẽ hàm delay... ...</button>
        <button class="task"><ui-icon name="word"></ui-icon>my project relays pro...</button>
        <button class="task"><ui-icon name="pcw"></ui-icon>PCWHD</button>
        <button class="task" aria-label="Window"></button>
        <button class="task active"><ui-icon name="isis"></ui-icon>UNTITLED - ISIS Prof...</button>
        <div class="tray">${["t1", "t2", "t3", "t4", "t5", "t6"].map((n) => html`<ui-icon name=${n}></ui-icon>`)}<span class="clock">2:19 PM</span></div>
      </div>
    </div>
    <context-menu class="popup" role="menu"></context-menu>
    <svg class="cursor" viewBox="0 0 13 20" aria-hidden="true"><path d="M1.5 1v14l3.3-3 2.6 6 2.4-1-2.6-5.8H12z" fill="#fff" stroke="#333"/></svg>`;
  }
}
